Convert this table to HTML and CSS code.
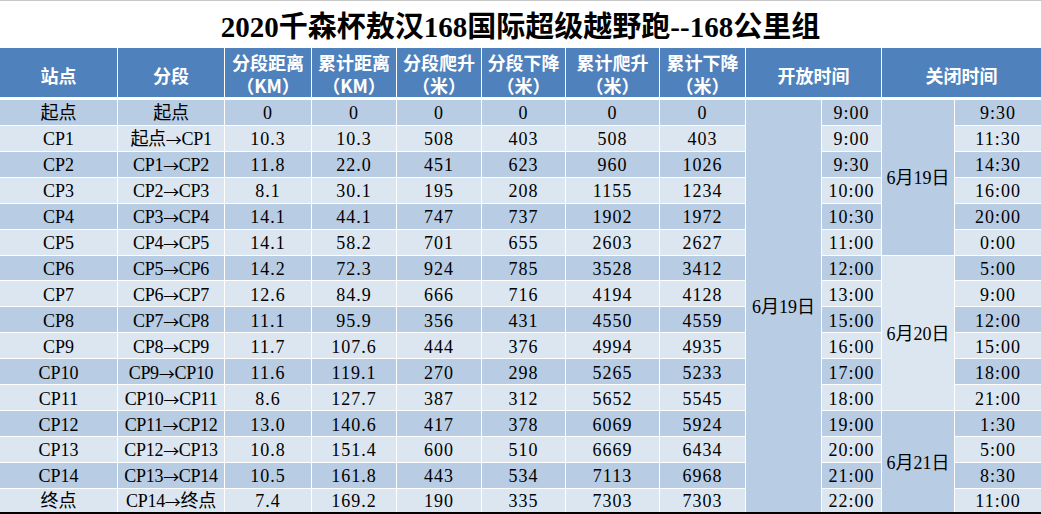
FILE: index.html
```html
<!DOCTYPE html>
<html lang="zh-CN">
<head>
<meta charset="utf-8">
<title>2020千森杯敖汉168国际超级越野跑--168公里组</title>
<link rel="stylesheet" href="styles.css">
</head>
<body>
<div class="sheet">
  <div class="title">2020千森杯敖汉168国际超级越野跑--168公里组</div>
  <div class="head">
    <div>站点</div>
    <div>分段</div>
    <div>分段距离<br>（KM）</div>
    <div>累计距离<br>（KM）</div>
    <div>分段爬升<br>（米）</div>
    <div>分段下降<br>（米）</div>
    <div>累计爬升<br>（米）</div>
    <div>累计下降<br>（米）</div>
    <div class="span2">开放时间</div>
    <div class="span2">关闭时间</div>
  </div>
  <div class="body">
    <div class="row dk"><div>起点</div><div>起点</div><div>0</div><div>0</div><div>0</div><div>0</div><div>0</div><div>0</div><div class="m-open">6月19日</div><div>9:00</div><div class="m-c1">6月19日</div><div>9:30</div></div>
    <div class="row lt"><div>CP1</div><div>起点<span class="arr">→</span>CP1</div><div>10.3</div><div>10.3</div><div>508</div><div>403</div><div>508</div><div>403</div><div>9:00</div><div>11:30</div></div>
    <div class="row dk"><div>CP2</div><div>CP1<span class="arr">→</span>CP2</div><div>11.8</div><div>22.0</div><div>451</div><div>623</div><div>960</div><div>1026</div><div>9:30</div><div>14:30</div></div>
    <div class="row lt"><div>CP3</div><div>CP2<span class="arr">→</span>CP3</div><div>8.1</div><div>30.1</div><div>195</div><div>208</div><div>1155</div><div>1234</div><div>10:00</div><div>16:00</div></div>
    <div class="row dk"><div>CP4</div><div>CP3<span class="arr">→</span>CP4</div><div>14.1</div><div>44.1</div><div>747</div><div>737</div><div>1902</div><div>1972</div><div>10:30</div><div>20:00</div></div>
    <div class="row lt"><div>CP5</div><div>CP4<span class="arr">→</span>CP5</div><div>14.1</div><div>58.2</div><div>701</div><div>655</div><div>2603</div><div>2627</div><div>11:00</div><div>0:00</div></div>
    <div class="row dk"><div>CP6</div><div>CP5<span class="arr">→</span>CP6</div><div>14.2</div><div>72.3</div><div>924</div><div>785</div><div>3528</div><div>3412</div><div>12:00</div><div class="m-c2">6月20日</div><div>5:00</div></div>
    <div class="row lt"><div>CP7</div><div>CP6<span class="arr">→</span>CP7</div><div>12.6</div><div>84.9</div><div>666</div><div>716</div><div>4194</div><div>4128</div><div>13:00</div><div>9:00</div></div>
    <div class="row dk"><div>CP8</div><div>CP7<span class="arr">→</span>CP8</div><div>11.1</div><div>95.9</div><div>356</div><div>431</div><div>4550</div><div>4559</div><div>15:00</div><div>12:00</div></div>
    <div class="row lt"><div>CP9</div><div>CP8<span class="arr">→</span>CP9</div><div>11.7</div><div>107.6</div><div>444</div><div>376</div><div>4994</div><div>4935</div><div>16:00</div><div>15:00</div></div>
    <div class="row dk"><div>CP10</div><div>CP9<span class="arr">→</span>CP10</div><div>11.6</div><div>119.1</div><div>270</div><div>298</div><div>5265</div><div>5233</div><div>17:00</div><div>18:00</div></div>
    <div class="row lt"><div>CP11</div><div>CP10<span class="arr">→</span>CP11</div><div>8.6</div><div>127.7</div><div>387</div><div>312</div><div>5652</div><div>5545</div><div>18:00</div><div>21:00</div></div>
    <div class="row dk"><div>CP12</div><div>CP11<span class="arr">→</span>CP12</div><div>13.0</div><div>140.6</div><div>417</div><div>378</div><div>6069</div><div>5924</div><div>19:00</div><div class="m-c3">6月21日</div><div>1:30</div></div>
    <div class="row lt"><div>CP13</div><div>CP12<span class="arr">→</span>CP13</div><div>10.8</div><div>151.4</div><div>600</div><div>510</div><div>6669</div><div>6434</div><div>20:00</div><div>5:00</div></div>
    <div class="row dk"><div>CP14</div><div>CP13<span class="arr">→</span>CP14</div><div>10.5</div><div>161.8</div><div>443</div><div>534</div><div>7113</div><div>6968</div><div>21:00</div><div>8:30</div></div>
    <div class="row lt"><div>终点</div><div>CP14<span class="arr">→</span>终点</div><div>7.4</div><div>169.2</div><div>190</div><div>335</div><div>7303</div><div>7303</div><div>22:00</div><div>11:00</div></div>
  </div>
</div>
</body>
</html>
```
FILE: styles.css
```css
html, body {
  margin: 0;
  padding: 0;
  background: #ffffff;
}

.sheet {
  width: 1042px;
  height: 514px;
  box-sizing: border-box;
  border-top: 1px solid #c8c8c8;
  border-right: 1px solid #d4d4d4;
  overflow: hidden;
}

.title {
  height: 47px;
  display: flex;
  align-items: center;
  justify-content: center;
  padding-top: 5px;
  box-sizing: border-box;
  font-family: "Liberation Serif", "Noto Sans CJK SC", serif;
  font-weight: 700;
  font-size: 29px;
  line-height: 1;
  color: #000;
}

.head,
.body {
  display: grid;
  grid-template-columns: 117px 106px 86px 84px 84px 83px 93px 85px 75px 59px 72px 86px;
  column-gap: 1px;
  width: 1041px;
}

.head {
  height: 49px;
}

.head > div {
  background: #4f81bd;
  color: #ffffff;
  font-family: "Noto Sans CJK SC", sans-serif;
  font-weight: 700;
  font-size: 18px;
  line-height: 23px;
  display: flex;
  align-items: center;
  justify-content: center;
  text-align: center;
  padding-top: 3px;
  box-sizing: border-box;
}

.head > .span2 {
  grid-column: span 2;
  padding-top: 6px;
}

.head > div:nth-child(1),
.head > div:nth-child(2) {
  padding-top: 6px;
}

.body {
  margin-top: 3px;
  height: 414px;
  grid-template-rows: repeat(15, 24.93px) minmax(0, 1fr);
  row-gap: 1px;
  border-bottom: 2px solid #000;
  box-sizing: border-box;
}

.row {
  display: contents;
}

.row > div {
  display: flex;
  align-items: center;
  justify-content: center;
  padding-top: 2px;
  box-sizing: border-box;
  min-height: 0;
  overflow: hidden;
  font-family: "Liberation Serif", "Noto Sans CJK SC", serif;
  font-size: 18px;
  line-height: 20px;
  color: #000;
  white-space: nowrap;
}

.row > div:nth-child(n+3) {
  letter-spacing: 1px;
}

.row > div:nth-child(2) {
  letter-spacing: -0.3px;
}

.arr {
  font-family: "Noto Sans CJK SC", sans-serif;
  font-size: 16px;
}

.row.dk > div {
  background: #b8cce4;
}

.row.lt > div {
  background: #dce6f1;
}

.row > div.m-open,
.row > div.m-c1,
.row > div.m-c2,
.row > div.m-c3 {
  letter-spacing: 0;
}

.row > div.m-open {
  grid-column: 9;
  grid-row: 1 / span 16;
  background: #b8cce4;
}

.row > div.m-c1 {
  grid-column: 11;
  grid-row: 1 / span 6;
  background: #b8cce4;
}

.row.dk > div.m-c2 {
  grid-column: 11;
  grid-row: 7 / span 6;
  background: #dce6f1;
}

.row > div.m-c3 {
  grid-column: 11;
  grid-row: 13 / span 4;
  background: #b8cce4;
}
```
